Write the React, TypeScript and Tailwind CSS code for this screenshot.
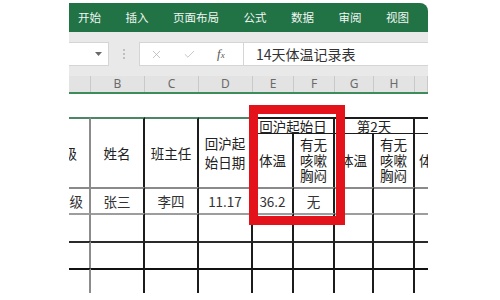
import { Fragment } from "react";
import { Check, X } from "lucide-react";

const cols = "grid grid-cols-[22px_54px_54px_54px_41px_41px_39px_41px_13px]";

const tabs = ["开始", "插入", "页面布局", "公式", "数据", "审阅", "视图"];
const letters = ["", "B", "C", "D", "E", "F", "G", "H", ""];

const Stack = ({ lines }: { lines: string[] }) => (
  <div className="flex flex-col items-center leading-[15.5px] pt-[3px]">
    {lines.map((l) => (
      <span key={l}>{l}</span>
    ))}
  </div>
);

export default function App() {
  const body = "flex items-center justify-center border-r-2 border-r-[#1c1c1c] overflow-hidden whitespace-nowrap";

  const dataRows = [
    { top: "border-t-[#8a8a8a]", cells: ["张三", "李四", "11.17", "36.2", "无", "", ""] },
    { top: "border-t-[#9d9d9d]", cells: ["", "", "", "", "", "", ""] },
    { top: "border-t-[#2a2a2a]", cells: ["", "", "", "", "", "", ""] },
    { top: "border-t-[#111111]", cells: ["", "", "", "", "", "", ""] },
  ];

  return (
    <div className="w-[500px] h-[300px] bg-white overflow-hidden font-['Noto_Sans_CJK_SC','Noto_Sans',sans-serif]">
      <div className="relative ml-[69px] w-[359px] pt-[3px]">
        {/* Ribbon tabs */}
        <div className="h-[29px] bg-[#217346] rounded-tr-[8px] flex items-center pl-[9px] gap-[24.5px] text-[11.5px] text-[#f1f6f2]">
          {tabs.map((t) => (
            <span key={t}>{t}</span>
          ))}
        </div>

        {/* Formula bar */}
        <div className="h-[44px] bg-[#e9e9e9] flex pt-[10px]">
          <div className="w-[40px] h-[24px] bg-white border border-l-0 border-[#d5d5d5] flex items-center justify-end pr-[6px]">
            <svg width="7" height="4" viewBox="0 0 7 4">
              <polygon points="0,0 7,0 3.5,4" fill="#6a6a6a" />
            </svg>
          </div>
          <div className="w-[30px] h-[24px] flex flex-col items-center justify-center gap-[2px]">
            <span className="w-[2px] h-[2px] rounded-full bg-[#b0b0b0]" />
            <span className="w-[2px] h-[2px] rounded-full bg-[#b0b0b0]" />
            <span className="w-[2px] h-[2px] rounded-full bg-[#b0b0b0]" />
          </div>
          <div className="flex-1 h-[24px] bg-white border border-r-0 border-[#d5d5d5] flex items-center">
            <div className="w-[104px] h-full flex items-center border-r border-[#d5d5d5]">
              <X size={13} strokeWidth={1.4} className="ml-[10px] text-[#b3b3b3]" />
              <Check size={13} strokeWidth={1.4} className="ml-[20px] text-[#b3b3b3]" />
              <span className="ml-[21px] font-['Liberation_Serif',serif] italic text-[13px] text-[#555]">
                f<span className="text-[9px]">x</span>
              </span>
            </div>
            <span className="pl-[12px] text-[14px] text-[#333] leading-none">14天体温记录表</span>
          </div>
        </div>

        {/* Column letters */}
        <div className={`${cols} h-[18px] bg-[#e3e3e3] border-b-2 border-b-[#3f8c5b]`}>
          {letters.map((l, i) => (
            <div
              key={i}
              className="flex items-center justify-center border-r border-r-[#c9c9c9] text-[12px] text-[#6a6a6a] font-['Noto_Sans',sans-serif] leading-none"
            >
              {l}
            </div>
          ))}
        </div>

        {/* Row 1 */}
        <div className="h-[23px]" />

        {/* Table */}
        <div className={`${cols} grid-rows-[16px_54px_26px_28px_27px_25px] text-[13.5px] text-[#222]`}>
          <div className="row-span-2 flex items-center justify-end pr-[12px] overflow-hidden whitespace-nowrap border-t-2 border-t-[#4c8664] border-r-2 border-r-[#8c8c8c]">
            班级
          </div>
          <div className={`row-span-2 border-t-2 border-t-[#4c8664] ${body}`}>姓名</div>
          <div className={`row-span-2 border-t-2 border-t-[#4c8664] ${body}`}>班主任</div>
          <div className={`row-span-2 border-t-2 border-t-[#4c8664] ${body}`}>
            <div className="flex flex-col items-center leading-[19px]">
              <span>回沪起</span>
              <span>始日期</span>
            </div>
          </div>
          <div className={`col-span-2 border-t-2 border-t-[#1c1c1c] ${body}`}>回沪起始日</div>
          <div className={`col-span-2 border-t-2 border-t-[#1c1c1c] ${body}`}>第2天</div>
          <div className="border-t-2 border-t-[#1c1c1c]" />

          <div className={`border-t-[1.5px] border-t-[#1c1c1c] ${body}`}>体温</div>
          <div className={`border-t-[1.5px] border-t-[#1c1c1c] items-start ${body}`}>
            <Stack lines={["有无", "咳嗽", "胸闷"]} />
          </div>
          <div className={`border-t-[1.5px] border-t-[#1c1c1c] ${body}`}>体温</div>
          <div className={`border-t-[1.5px] border-t-[#1c1c1c] items-start ${body}`}>
            <Stack lines={["有无", "咳嗽", "胸闷"]} />
          </div>
          <div className="border-t-[1.5px] border-t-[#1c1c1c] flex items-center pl-[4px] overflow-hidden whitespace-nowrap">
            体温
          </div>

          {dataRows.map((row, r) => (
            <Fragment key={r}>
              <div
                className={`flex items-center justify-end pr-[6px] overflow-hidden whitespace-nowrap border-t-2 ${row.top} border-r-2 border-r-[#8c8c8c] text-[#333]`}
              >
                {r === 0 ? "一年级" : ""}
              </div>
              {row.cells.map((c, i) => (
                <div key={i} className={`border-t-2 ${row.top} text-[#333] ${body}`}>
                  {c}
                </div>
              ))}
              <div className={`border-t-2 ${row.top}`} />
            </Fragment>
          ))}
        </div>

        {/* Highlight box */}
        <div className="absolute left-[180px] top-[105px] w-[96px] h-[120px] border-[9px] border-[#e3121b]" />
      </div>
    </div>
  );
}
